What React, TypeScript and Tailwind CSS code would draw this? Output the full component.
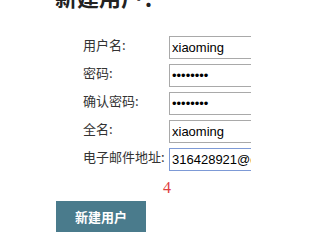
export default function App() {
  const rows = [
    { label: "用户名:", type: "text", value: "xiaoming" },
    { label: "密码:", type: "password", value: "12345678" },
    { label: "确认密码:", type: "password", value: "12345678" },
    { label: "全名:", type: "text", value: "xiaoming" },
    { label: "电子邮件地址:", type: "text", value: "316428921@qq.com", focus: true },
  ];

  return (
    <div className="w-[251px] h-[236px] overflow-hidden bg-white font-['Noto_Sans_CJK_SC',sans-serif]">
      <h1 className="ml-[55px] -mt-[15px] text-[22px] leading-[22px] font-bold text-[#222]">
        新建用户：
      </h1>

      <div className="mt-[29px] ml-[83px] flex flex-col gap-[5px]">
        {rows.map((row) => (
          <div key={row.label} className="flex items-start">
            <label className="w-[86px] shrink-0 text-[13px] leading-[17px] text-[#333]">
              {row.label}
            </label>
            <input
              type={row.type}
              defaultValue={row.value}
              className={`w-[140px] h-[23px] shrink-0 border px-[2px] text-[13px] text-black font-['Liberation_Sans',sans-serif] outline-none ${
                row.focus ? "border-[#7d9ad6]" : "border-[#a9a9a9]"
              }`}
            />
          </div>
        ))}
      </div>

      <div className="ml-[163px] mt-[8px] text-[16px] leading-[18px] text-[#e04040] font-['Liberation_Serif',serif]">
        4
      </div>

      <button className="ml-[56px] mt-[4px] w-[90px] h-[31px] bg-[#4a7b8c] text-white text-[13px] font-bold">
        新建用户
      </button>
    </div>
  );
}
